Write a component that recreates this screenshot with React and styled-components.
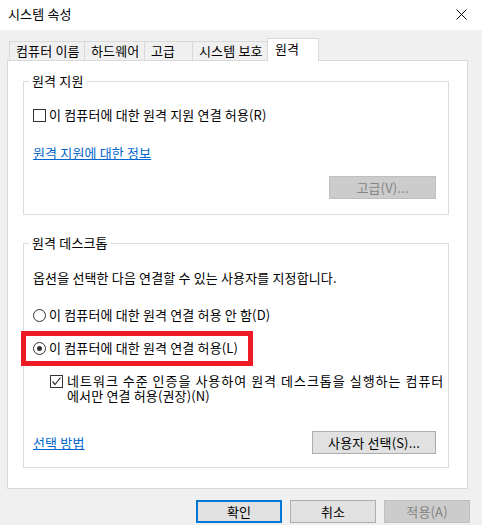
import React from 'react';
import styled, { createGlobalStyle } from 'styled-components';

const GlobalStyle = createGlobalStyle`
  html, body {
    margin: 0;
    padding: 0;
    background: #fff;
  }
  body {
    font-family: "Noto Sans CJK KR", "Noto Sans", sans-serif;
    font-size: 13px;
    letter-spacing: 0.15px;
    color: #000;
  }
`;

const tabs = [
  { label: '컴퓨터 이름', w: 76 },
  { label: '하드웨어', w: 61 },
  { label: '고급', w: 49 },
  { label: '시스템 보호', w: 76 },
  { label: '원격', w: 52, active: true },
];

export default function App() {
  return (
    <Window>
      <GlobalStyle />
      <TitleBar>
        <Title>시스템 속성</Title>
        <svg width="11" height="11" viewBox="0 0 11 11">
          <path d="M0.5 0.5 L10.5 10.5 M10.5 0.5 L0.5 10.5" stroke="#000" strokeWidth="1" />
        </svg>
      </TitleBar>
      <Body>
        <TabRow>
          {tabs.map((t) => (
            <Tab key={t.label} $w={t.w} $active={t.active}>
              {t.label}
            </Tab>
          ))}
        </TabRow>
        <Panel>
          <Group $pb={15}>
            <Legend>원격 지원</Legend>
            <Row $mt={18}>
              <CheckBox />
              이 컴퓨터에 대한 원격 지원 연결 허용(R)
            </Row>
            <Row $mt={22}>
              <Link href="#">원격 지원에 대한 정보</Link>
            </Row>
            <ButtonRow $mt={15}>
              <Button $w={107} disabled>고급(V)...</Button>
            </ButtonRow>
          </Group>

          <Group $pb={13} $mt={20}>
            <Legend>원격 데스크톱</Legend>
            <Row $mt={19}>옵션을 선택한 다음 연결할 수 있는 사용자를 지정합니다.</Row>
            <Row $mt={21}>
              <Radio />
              이 컴퓨터에 대한 원격 연결 허용 안 함(D)
            </Row>
            <Highlight $mt={17}>
              <Radio $on />
              이 컴퓨터에 대한 원격 연결 허용(L)
            </Highlight>
            <SubOption>
              <CheckBox $on>
                <svg width="11" height="11" viewBox="0 0 11 11">
                  <path d="M1.5 5.5 L4 8.5 L9.5 1.5" fill="none" stroke="#333" strokeWidth="1.2" />
                </svg>
              </CheckBox>
              <SubText>
                <SubLine $ls={1}>네트워크 수준 인증을 사용하여 원격 데스크톱을 실행하는 컴퓨터</SubLine>
                <SubLine>에서만 연결 허용(권장)(N)</SubLine>
              </SubText>
            </SubOption>
            <FooterRow>
              <Link href="#">선택 방법</Link>
              <Button $w={124}>사용자 선택(S)...</Button>
            </FooterRow>
          </Group>
        </Panel>
        <DialogButtons>
          <Button $w={86} $default>확인</Button>
          <Button $w={86}>취소</Button>
          <Button $w={86} disabled>적용(A)</Button>
        </DialogButtons>
      </Body>
    </Window>
  );
}

const Window = styled.div`
  width: 482px;
`;

const TitleBar = styled.div`
  height: 30px;
  display: flex;
  align-items: center;
  justify-content: space-between;
  padding: 0 15px 0 8px;
  box-sizing: border-box;
  background: #fff;

  svg {
    margin-top: -2px;
  }
`;

const Title = styled.span`
  line-height: 16px;
  margin-top: -2px;
`;

const Body = styled.div`
  background: #f0f0f0;
  height: 495px;
  padding: 8px 14px 0 7px;
  box-sizing: border-box;
`;

const TabRow = styled.div`
  display: flex;
  align-items: flex-end;
  height: 22px;
  padding-left: 2px;
`;

const Tab = styled.div`
  box-sizing: border-box;
  width: ${(p) => p.$w}px;
  height: ${(p) => (p.$active ? 23 : 19)}px;
  margin-left: -1px;
  margin-bottom: ${(p) => (p.$active ? -1 : 0)}px;
  padding: ${(p) => (p.$active ? '2px 0 0 7px' : '1px 0 0 6px')};
  border: 1px solid #d9d9d9;
  border-bottom: none;
  background: ${(p) => (p.$active ? '#fff' : '#f0f0f0')};
  line-height: 16px;
  white-space: nowrap;
  position: ${(p) => (p.$active ? 'relative' : 'static')};
  z-index: 1;

  &:first-child {
    margin-left: 0;
  }
`;

const Panel = styled.div`
  box-sizing: border-box;
  height: 429px;
  background: #fff;
  border: 1px solid #d9d9d9;
  padding: 12px 18px 0 15px;
`;

const Group = styled.fieldset`
  margin: ${(p) => p.$mt || 0}px 0 0 0;
  min-width: 0;
  border: 1px solid #dcdcdc;
  padding: 0 12px ${(p) => p.$pb}px 9px;
`;

const Legend = styled.legend`
  padding: 0 3px;
  margin-left: -4px;
  line-height: 16px;
`;

const Row = styled.div`
  display: flex;
  align-items: center;
  height: 16px;
  line-height: 16px;
  margin-top: ${(p) => p.$mt || 0}px;
  white-space: nowrap;
`;

const Highlight = styled(Row)`
  position: relative;

  &::after {
    content: '';
    position: absolute;
    top: -9px;
    left: -12px;
    width: 232px;
    height: 35px;
    box-sizing: border-box;
    border: 5px solid #ed1c24;
  }
`;

const CheckBox = styled.span`
  box-sizing: border-box;
  width: 13px;
  height: 13px;
  flex: none;
  border: 1px solid #333;
  background: #fff;
  margin-right: 3px;
  display: flex;
  align-items: center;
  justify-content: center;
`;

const Radio = styled.span`
  box-sizing: border-box;
  width: 13px;
  height: 13px;
  flex: none;
  border: 1px solid #333;
  border-radius: 50%;
  background: #fff;
  margin-right: 3px;
  display: flex;
  align-items: center;
  justify-content: center;

  &::after {
    content: '';
    display: ${(p) => (p.$on ? 'block' : 'none')};
    width: 5px;
    height: 5px;
    border-radius: 50%;
    background: #333;
  }
`;

const SubOption = styled.div`
  display: flex;
  align-items: flex-start;
  margin-top: 17px;
  padding-left: 17px;
  white-space: nowrap;

  ${CheckBox} {
    margin-top: 2px;
    margin-right: 4px;
  }
`;

const SubText = styled.div`
  display: flex;
  flex-direction: column;
`;

const SubLine = styled.span`
  display: block;
  height: 15px;
  line-height: 15px;
  letter-spacing: ${(p) => p.$ls || 0.15}px;
`;

const Link = styled.a`
  color: #0066cc;
  text-decoration: underline;
  line-height: 16px;
`;

const ButtonRow = styled.div`
  display: flex;
  justify-content: flex-end;
  margin-top: ${(p) => p.$mt || 0}px;
`;

const FooterRow = styled.div`
  display: flex;
  align-items: center;
  justify-content: space-between;
  margin-top: 28px;
`;

const Button = styled.button`
  box-sizing: border-box;
  width: ${(p) => p.$w}px;
  height: 23px;
  padding: 0;
  font-family: inherit;
  font-size: 13px;
  letter-spacing: 0.15px;
  line-height: 16px;
  color: #000;
  background: #e1e1e1;
  border: ${(p) => (p.$default ? '2px solid #0078d7' : '1px solid #adadad')};
  border-radius: 0;

  &:disabled {
    background: #cccccc;
    border-color: #bfbfbf;
    color: #838383;
  }
`;

const DialogButtons = styled.div`
  display: flex;
  justify-content: flex-end;
  gap: 8px;
  margin-top: 11px;
  margin-right: -2px;
`;
